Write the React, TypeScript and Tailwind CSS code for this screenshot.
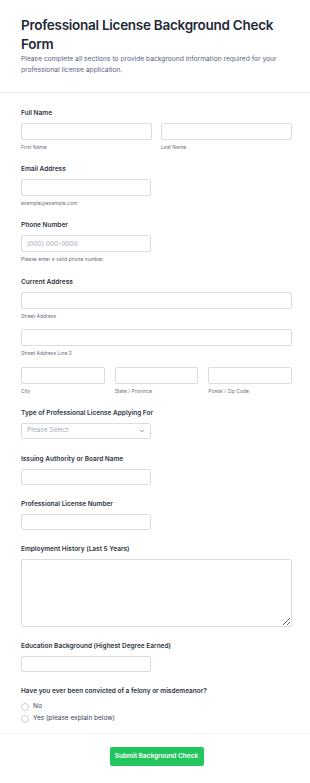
import { ChevronDown } from 'lucide-react'
import type { ReactNode } from 'react'

const inputCls =
  'block w-full h-[17px] rounded-[2px] border border-[#d9dde3] bg-white px-[5px] text-[6.5px] text-[#374151] outline-none placeholder:text-[#a3abb8]'

function Label({ children }: { children: ReactNode }) {
  return <div className="mb-[5px] text-[6.5px] font-semibold leading-[10px] text-[#2f3745]">{children}</div>
}

function Sub({ children }: { children: ReactNode }) {
  return <div className="mt-[4px] text-[5px] leading-[7px] text-[#6b7280]">{children}</div>
}

function Radio({ label }: { label: string }) {
  return (
    <label className="flex h-[12px] items-center gap-[4px]">
      <span className="h-[8px] w-[8px] rounded-full border border-[#c9ced6] bg-white" />
      <span className="text-[6.5px] text-[#374151]">{label}</span>
    </label>
  )
}

export default function App() {
  return (
    <div className="min-h-[783px] w-full bg-white font-['Inter',sans-serif]">
      <header className="border-b border-[#e5e7eb] pb-[16px] pl-[21px] pr-[18px] pt-[16px]">
        <h1 className="text-[13.5px] font-semibold leading-[19px] tracking-[-0.02em] text-[#1f2937]">
          Professional License Background Check Form
        </h1>
        <p className="text-[6.7px] leading-[11px] text-[#55657e]">
          Please complete all sections to provide background information required for your professional license
          application.
        </p>
      </header>

      <form className="pb-[8px] pl-[21px] pr-[18px] pt-[15px]" onSubmit={(e) => e.preventDefault()}>
        <div>
          <Label>Full Name</Label>
          <div className="grid grid-cols-2 gap-x-[9px]">
            <div>
              <input className={inputCls} />
              <Sub>First Name</Sub>
            </div>
            <div>
              <input className={inputCls} />
              <Sub>Last Name</Sub>
            </div>
          </div>
        </div>

        <div className="mt-[13px]">
          <Label>Email Address</Label>
          <input className={`${inputCls} !w-[130px]`} />
          <Sub>example@example.com</Sub>
        </div>

        <div className="mt-[13px]">
          <Label>Phone Number</Label>
          <input className={`${inputCls} !w-[130px]`} placeholder="(000) 000-0000" />
          <Sub>Please enter a valid phone number.</Sub>
        </div>

        <div className="mt-[14px]">
          <Label>Current Address</Label>
          <input className={inputCls} />
          <Sub>Street Address</Sub>
          <input className={`${inputCls} mt-[9px]`} />
          <Sub>Street Address Line 2</Sub>
          <div className="mt-[10px] grid grid-cols-3 gap-x-[10px]">
            <div>
              <input className={inputCls} />
              <Sub>City</Sub>
            </div>
            <div>
              <input className={inputCls} />
              <Sub>State / Province</Sub>
            </div>
            <div>
              <input className={inputCls} />
              <Sub>Postal / Zip Code</Sub>
            </div>
          </div>
        </div>

        <div className="mt-[13px]">
          <Label>Type of Professional License Applying For</Label>
          <div className="flex h-[16px] w-[130px] items-center justify-between rounded-[2px] border border-[#d9dde3] bg-white pl-[5px] pr-[5px]">
            <span className="text-[6.5px] text-[#a3abb8]">Please Select</span>
            <ChevronDown className="h-[6px] w-[6px] text-[#4b5563]" strokeWidth={2.5} />
          </div>
        </div>

        <div className="mt-[15px]">
          <Label>Issuing Authority or Board Name</Label>
          <input className={`${inputCls} !h-[16px] !w-[130px]`} />
        </div>

        <div className="mt-[14px]">
          <Label>Professional License Number</Label>
          <input className={`${inputCls} !h-[16px] !w-[130px]`} />
        </div>

        <div className="mt-[14px]">
          <Label>Employment History (Last 5 Years)</Label>
          <textarea className="block h-[68px] w-full rounded-[2px] border border-[#d9dde3] bg-white p-[5px] text-[6.5px] outline-none" />
        </div>

        <div className="mt-[14px]">
          <Label>Education Background (Highest Degree Earned)</Label>
          <input className={`${inputCls} !h-[16px] !w-[130px]`} />
        </div>

        <div className="mt-[14px]">
          <div className="text-[6.5px] font-semibold leading-[10px] text-[#2f3745]">
            Have you ever been convicted of a felony or misdemeanor?
          </div>
          <div className="mt-[5px]">
            <Radio label="No" />
            <Radio label="Yes (please explain below)" />
          </div>
        </div>
      </form>

      <footer className="flex justify-center border-t border-[#f1f3f6] pb-[17px] pl-[21px] pr-[18px] pt-[13px]">
        <button
          type="button"
          className="flex h-[19px] w-[94px] items-center justify-center rounded-[2px] bg-[#22c55e] text-[6.5px] font-semibold text-white"
        >
          Submit Background Check
        </button>
      </footer>
    </div>
  )
}
